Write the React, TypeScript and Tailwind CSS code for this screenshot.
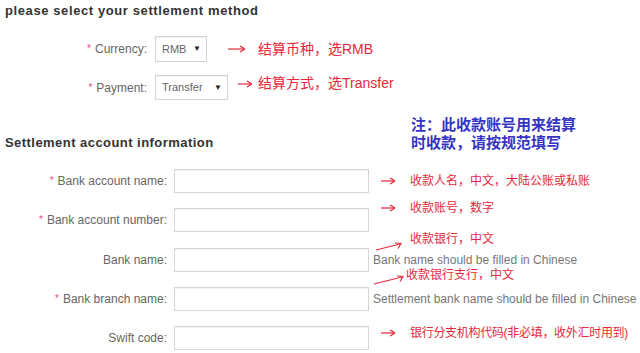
import React from "react";

const red = "text-[#e6283c]";

function Arrow({ width = 15 }: { width?: number }) {
	return (
		<svg width={width} height="8" viewBox={`0 0 ${width} 8`} className="shrink-0">
			<line x1="0" y1="4" x2={width - 1} y2="4" stroke="#e6283c" strokeWidth="1.2" />
			<path d={`M${width - 5} 1 L${width} 4 L${width - 5} 7`} fill="none" stroke="#e6283c" strokeWidth="1.2" />
		</svg>
	);
}

function SlantArrow({ w, h }: { w: number; h: number }) {
	return (
		<svg width={w} height={h} viewBox={`0 0 ${w} ${h}`}>
			<line x1="1" y1={h - 1} x2={w - 2} y2="2" stroke="#e6283c" strokeWidth="1.2" />
			<path d={`M${w - 7} 1 L${w - 1} 1.5 L${w - 4} 6.5`} fill="none" stroke="#e6283c" strokeWidth="1.2" />
		</svg>
	);
}

function Star() {
	return <span className="mr-[4px] text-[10px] leading-none text-[#e0507a]">*</span>;
}

function Select({ value, width }: { value: string; width: string }) {
	return (
		<div
			className={`flex h-full items-center justify-between border border-[#d4d4d4] bg-white pl-[6px] pr-[5px] shadow-[inset_0_1px_1px_rgba(0,0,0,0.06)] ${width}`}
		>
			<span className="text-[11px] text-[#666]">{value}</span>
			<span className="text-[8px] text-[#222]">▼</span>
		</div>
	);
}

const fields = [
	{ label: "Bank account name:", required: true },
	{ label: "Bank account number:", required: true },
	{ label: "Bank name:", required: false },
	{ label: "Bank branch name:", required: true },
	{ label: "Swift code:", required: false },
];

function Hint({ index }: { index: number }) {
	if (index === 0 || index === 1 || index === 4) {
		const note = [
			"收款人名，中文，大陆公账或私账",
			"收款账号，数字",
			"",
			"",
			"银行分支机构代码(非必填，收外汇时用到)",
		][index];
		const shift = ["translate-y-[3px]", "-translate-y-[9px]", "", "", "-translate-y-[2px]"][index];
		return (
			<div className={`flex items-center pl-[12px] ${shift}`}>
				<Arrow width={14} />
				<span className={`ml-[15px] text-[12px] ${red} ${index === 4 ? "tracking-[-0.3px]" : ""}`}>
					{note}
				</span>
			</div>
		);
	}
	const grey =
		index === 2
			? "Bank name should be filled in Chinese"
			: "Settlement bank name should be filled in Chinese";
	const redNote = index === 2 ? "收款银行，中文" : "收款银行支行，中文";
	return (
		<div className="relative flex h-full items-center pl-[4px]">
			<span className="text-[12px] text-[#777]">{grey}</span>
			{index === 2 ? (
				<>
					<div className="absolute left-[6px] top-[-6px]">
						<SlantArrow w={27} h={9} />
					</div>
					<span className={`absolute left-[41px] top-[-16px] text-[12px] leading-[14px] ${red}`}>
						{redNote}
					</span>
				</>
			) : (
				<>
					<div className="absolute left-[4px] top-[-12px]">
						<SlantArrow w={31} h={10} />
					</div>
					<span className={`absolute left-[37px] top-[-19px] text-[12px] leading-[14px] ${red}`}>
						{redNote}
					</span>
				</>
			)}
		</div>
	);
}

export default function App() {
	return (
		<div
			className="flex h-[353px] w-[640px] flex-col overflow-hidden bg-white pt-[3px]"
			style={{ fontFamily: '"Liberation Sans", "Noto Sans CJK SC", sans-serif' }}
		>
			<h2 className="h-[16px] pl-[5px] text-[13px] font-bold leading-[16px] tracking-[0.6px] text-[#333]">
				please select your settlement method
			</h2>

			{/* Currency */}
			<div className="mt-[17px] flex h-[26px] items-center">
				<div className="flex w-[147px] items-center justify-end text-[12px] text-[#666]">
					<Star />
					Currency:
				</div>
				<div className="ml-[8px] h-full">
					<Select value="RMB" width="w-[52px]" />
				</div>
				<div className="ml-[21px]">
					<Arrow width={17} />
				</div>
				<span className={`ml-[13px] text-[14px] ${red}`}>结算币种，选RMB</span>
			</div>

			{/* Payment */}
			<div className="mt-[13px] flex h-[25px] items-center">
				<div className="flex w-[147px] items-center justify-end text-[12px] text-[#666]">
					<Star />
					Payment:
				</div>
				<div className="ml-[8px] h-full">
					<Select value="Transfer" width="w-[73px]" />
				</div>
				<div className="ml-[10px] -translate-y-[4px]">
					<Arrow width={14} />
				</div>
				<span className={`ml-[6px] -translate-y-[4px] text-[14px] ${red}`}>结算方式，选Transfer</span>
			</div>

			{/* Settlement account heading + note */}
			<div className="mt-[16px] flex items-start">
				<h2 className="mt-[19px] w-[411px] pl-[5px] text-[13px] font-bold leading-[16px] tracking-[0.45px] text-[#333]">
					Settlement account information
				</h2>
				<div className="text-[15px] font-bold leading-[18px] text-[#3434c4]">
					<p>注：此收款账号用来结算</p>
					<p>时收款，请按规范填写</p>
				</div>
			</div>

			{/* Form */}
			<div className="mt-[17px] flex flex-col gap-[15.25px]">
				{fields.map((field, i) => (
					<div key={field.label} className="flex h-[24px] items-center">
						<div className="flex w-[167px] items-center justify-end text-[12px] text-[#666]">
							{field.required && <Star />}
							{field.label}
						</div>
						<div className="ml-[7px] h-full w-[195px] border border-[#d6d6d6] bg-white shadow-[inset_0_1px_1px_rgba(0,0,0,0.06)]" />
						<div className="h-full flex-1">
							<Hint index={i} />
						</div>
					</div>
				))}
			</div>
		</div>
	);
}
